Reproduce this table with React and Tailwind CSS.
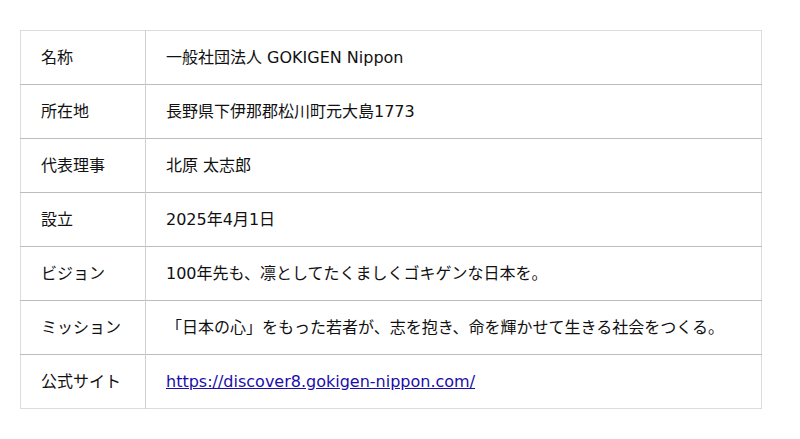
const rows = [
  ["名称", "一般社団法人 GOKIGEN Nippon"],
  ["所在地", "長野県下伊那郡松川町元大島1773"],
  ["代表理事", "北原 太志郎"],
  ["設立", "2025年4月1日"],
  ["ビジョン", "100年先も、凛としてたくましくゴキゲンな日本を。"],
  ["ミッション", "「日本の心」をもった若者が、志を抱き、命を輝かせて生きる社会をつくる。"],
];

export default function App() {
  return (
    <div
      className="bg-white w-[800px] h-[439px] px-5 pt-[30px] text-[16px] text-[#111]"
      style={{ fontFamily: '"DejaVu Sans", "Noto Sans CJK JP", sans-serif' }}
    >
      <table className="w-[742px] border-collapse border border-[#dcdcdc]">
        <tbody>
          {rows.map(([k, v]) => (
            <tr key={k} className="h-[54px] border-b border-[#bdbdbd]">
              <td className="w-[125px] pl-5 border-r border-[#cfcfcf] align-middle">{k}</td>
              <td className="pl-5 align-middle">{v}</td>
            </tr>
          ))}
          <tr className="h-[54px]">
            <td className="w-[125px] pl-5 border-r border-[#cfcfcf] align-middle">公式サイト</td>
            <td className="pl-5 align-middle">
              <a href="#" className="text-[#1a0dab] underline">https://discover8.gokigen-nippon.com/</a>
            </td>
          </tr>
        </tbody>
      </table>
    </div>
  );
}
